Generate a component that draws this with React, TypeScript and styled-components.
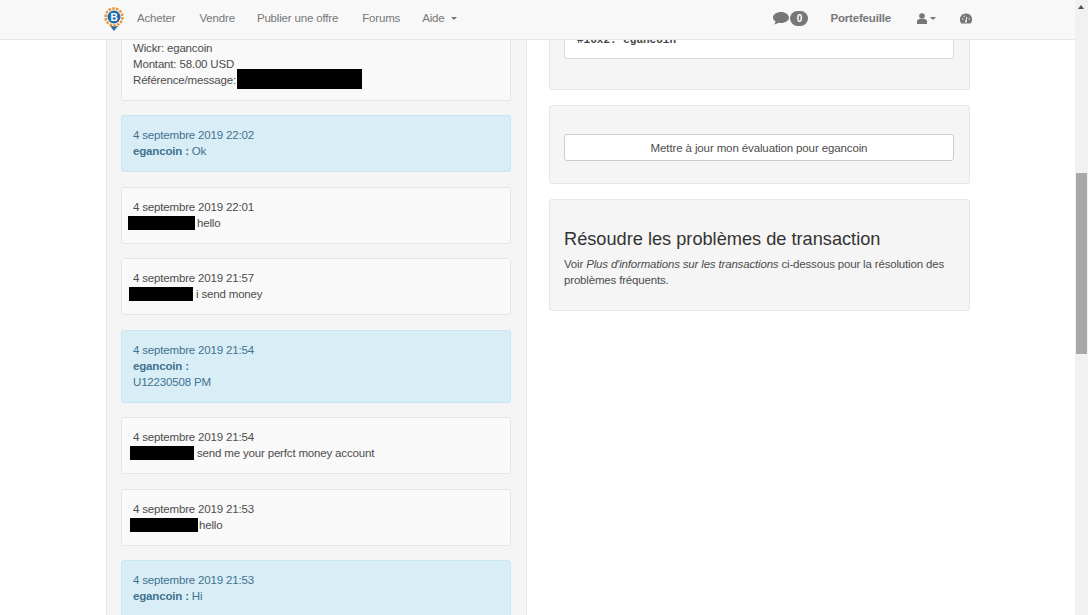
import React from "react";
import styled, { createGlobalStyle } from "styled-components";

const Global = createGlobalStyle`
  html, body { margin: 0; padding: 0; height: 615px; overflow: hidden; background: #fff; }
  body { font-family: "Liberation Sans", Arial, sans-serif; font-size: 11.5px; letter-spacing: -0.17px; line-height: 16px; color: #4d4d4d; }
`;
const Page = styled.div`width:1088px;height:615px;overflow:hidden;display:flex;`;
const Main = styled.div`width:1075px;height:615px;overflow:hidden;display:flex;flex-direction:column;`;
const Nav = styled.nav`background:#f8f8f8;border-bottom:1px solid #e7e7e7;display:flex;align-items:center;flex:none;padding:0 103px 2px 104px;height:37px;color:#777;position:relative;z-index:1;`;
const NavLink = styled.span<{ $gap?: number }>`margin-left:${p => p.$gap ?? 0}px;padding-bottom:2px;color:#777;`;
const Right = styled.div`margin-left:auto;display:flex;align-items:center;`;
const Badge = styled.span`background:#777;color:#fff;font-weight:700;font-size:10px;border-radius:9px;width:18px;height:15px;line-height:15px;text-align:center;margin-left:1px;`;
const Strong = styled.span<{ $gap: number }>`font-weight:700;color:#777;margin-left:${p => p.$gap}px;padding-bottom:2px;`;
const Caret = styled.span`display:inline-block;width:0;height:0;border-left:3.5px solid transparent;border-right:3.5px solid transparent;border-top:3.5px solid #777;margin-left:3px;vertical-align:middle;`;
const MenuIcon = styled.span<{ $gap: number }>`margin-left:${p => p.$gap}px;display:flex;align-items:center;`;
const Content = styled.div`flex:1;display:flex;padding-left:106px;overflow:hidden;`;
const Left = styled.div`width:421px;height:576px;box-sizing:border-box;background:#f5f5f5;border-left:1px solid #e6e6e6;border-right:1px solid #e6e6e6;padding:0 14px;overflow:hidden;flex:none;`;
const Msg = styled.div<{ $info?: boolean }>`box-sizing:border-box;width:390px;padding:11px 11px 12px;margin-bottom:14.5px;border:1px solid ${p => p.$info ? "#c6e6f1" : "#e6e6e6"};border-radius:3px;background:${p => p.$info ? "#d9edf7" : "#f9f9f9"};color:${p => p.$info ? "#41728f" : "#4d4d4d"};`;
const FirstMsg = styled(Msg)`border-top:none;border-radius:0 0 3px 3px;padding:0 11px 12px;height:61px;margin-bottom:14px;`;
const Line = styled.div`height:16px;white-space:nowrap;display:flex;align-items:center;`;
const Redact = styled.span<{ $w: number; $h?: number; $ml?: number; $mt?: number; $mr?: number }>`display:inline-block;width:${p => p.$w}px;height:${p => p.$h ?? 14}px;background:#000;margin-left:${p => p.$ml ?? 0}px;margin-top:${p => p.$mt ?? 0}px;margin-right:${p => p.$mr ?? 2}px;flex:none;`;
const Side = styled.div`margin-left:22px;width:421px;display:flex;flex-direction:column;gap:15px;flex:none;`;
const Well = styled.div`box-sizing:border-box;width:421px;background:#f5f5f5;border:1px solid #e6e6e6;border-radius:3px;padding:15px 15px 15px 14px;`;
const TopWell = styled(Well)`border-top:none;border-radius:0 0 3px 3px;padding-top:0;height:50px;`;
const ActionWell = styled(Well)`height:79px;padding-top:28px;`;
const HelpWell = styled(Well)`height:112px;`;
const Pre = styled.pre`margin:0;height:19px;box-sizing:border-box;background:#fff;border:1px solid #ddd;border-top:none;border-radius:0 0 3px 3px;font:700 11px/0 "Liberation Mono",monospace;letter-spacing:0;color:#444;padding:0 12px;overflow:hidden;`;
const Btn = styled.div`height:27px;box-sizing:border-box;background:#fff;border:1px solid #ccc;border-radius:3px;text-align:center;line-height:26px;letter-spacing:-0.12px;color:#4d4d4d;`;
const H = styled.h3`margin:12px 0 5px;font-size:18.2px;line-height:24px;letter-spacing:0;font-weight:400;color:#333;`;
const Scroll = styled.div`width:13px;height:615px;background:#f1f1f1;position:relative;flex:none;`;
const Arrow = styled.div`position:absolute;top:5px;left:3px;width:0;height:0;border-left:3.5px solid transparent;border-right:3.5px solid transparent;border-bottom:4px solid #505050;`;
const Thumb = styled.div`position:absolute;top:173px;left:1px;width:11px;height:181px;background:#a8a8a8;`;

const Logo = () => (
  <svg width="20" height="28" viewBox="0 0 20 28">
    <path d="M6 21h8l-4 5z" fill="#2a6da8" />
    <circle cx="10" cy="12" r="8.500" fill="none" stroke="#e8963a" strokeWidth="2.500" strokeDasharray="2.600 1.200" />
    <circle cx="10" cy="12" r="6.500" fill="#1f6aa8" />
    <text x="10" y="15.500" fontSize="10" fontWeight="700" textAnchor="middle" fill="#fff" fontFamily="Liberation Sans">B</text>
  </svg>
);
const Chat = () => (
  <svg width="16" height="13" viewBox="0 0 16 13"><path d="M8 0C3.600 0 0 2.400 0 5.500c0 1.700 1 3.100 2.600 4.100C2.400 10.800 1.700 11.800 1 12.500c1.800-.2 3.400-.8 4.700-1.700.7.100 1.500.2 2.300.2 4.400 0 8-2.500 8-5.500S12.400 0 8 0z" fill="#777"/></svg>
);
const User = () => (
  <svg width="10" height="11" viewBox="0 0 10 11"><circle cx="5" cy="3" r="2.800" fill="#777"/><path d="M0 11V8.500C0 7 1.200 6 2.500 6h5C8.800 6 10 7 10 8.500V11z" fill="#777"/></svg>
);
const Gauge = () => (
  <svg width="12" height="11" viewBox="0 0 12 11"><path d="M6 0.500a6 6 0 0 0-5 9.500q.4.500 1 .5h8q.6 0 1-.5a6 6 0 0 0-5-9.500z" fill="#777"/><path d="M6 8.500L6.800 4" stroke="#f8f8f8" strokeWidth="1"/><circle cx="6" cy="8.500" r="1" fill="#f8f8f8"/><circle cx="2.800" cy="6" r=".7" fill="#f8f8f8"/><circle cx="9.200" cy="6" r=".7" fill="#f8f8f8"/><circle cx="4.200" cy="3.200" r=".7" fill="#f8f8f8"/></svg>
);

export default function App() {
  return (
    <Page>
      <Global />
      <Main>
        <Nav>
          <Logo />
          <NavLink $gap={13}>Acheter</NavLink>
          <NavLink $gap={24}>Vendre</NavLink>
          <NavLink $gap={22}>Publier une offre</NavLink>
          <NavLink $gap={24}>Forums</NavLink>
          <NavLink $gap={22}>Aide <Caret /></NavLink>
          <Right>
            <Chat />
            <Badge>0</Badge>
            <Strong $gap={22}>Portefeuille</Strong>
            <MenuIcon $gap={26}><User /><Caret /></MenuIcon>
            <MenuIcon $gap={24}><Gauge /></MenuIcon>
          </Right>
        </Nav>
        <Content>
          <Left>
            <FirstMsg>
              <Line>Wickr: egancoin</Line>
              <Line>Montant: 58.00 USD</Line>
              <Line>Référence/message:<Redact $w={125} $h={20} $ml={1} $mt={-2} /></Line>
            </FirstMsg>
            <Msg $info><Line>4 septembre 2019 22:02</Line><Line><b>egancoin :</b>&nbsp;Ok</Line></Msg>
            <Msg><Line>4 septembre 2019 22:01</Line><Line><Redact $w={67} $ml={-5} />hello</Line></Msg>
            <Msg><Line>4 septembre 2019 21:57</Line><Line><Redact $w={64} $ml={-4} $mr={0} />&nbsp;i send money</Line></Msg>
            <Msg $info><Line>4 septembre 2019 21:54</Line><Line><b>egancoin :</b></Line><Line>U12230508 PM</Line></Msg>
            <Msg><Line>4 septembre 2019 21:54</Line><Line><Redact $w={64} $ml={-3} $mr={3} />send me your perfct money account</Line></Msg>
            <Msg><Line>4 septembre 2019 21:53</Line><Line><Redact $w={68} $ml={-3} $mr={1} />hello</Line></Msg>
            <Msg $info><Line>4 septembre 2019 21:53</Line><Line><b>egancoin :</b>&nbsp;Hi</Line></Msg>
          </Left>
          <Side>
            <TopWell><Pre>#16x2: egancoin</Pre></TopWell>
            <ActionWell><Btn>Mettre à jour mon évaluation pour egancoin</Btn></ActionWell>
            <HelpWell>
              <H>Résoudre les problèmes de transaction</H>
              <div>Voir <i>Plus d'informations sur les transactions</i> ci-dessous pour la résolution des problèmes fréquents.</div>
            </HelpWell>
          </Side>
        </Content>
      </Main>
      <Scroll><Arrow /><Thumb /></Scroll>
    </Page>
  );
}
